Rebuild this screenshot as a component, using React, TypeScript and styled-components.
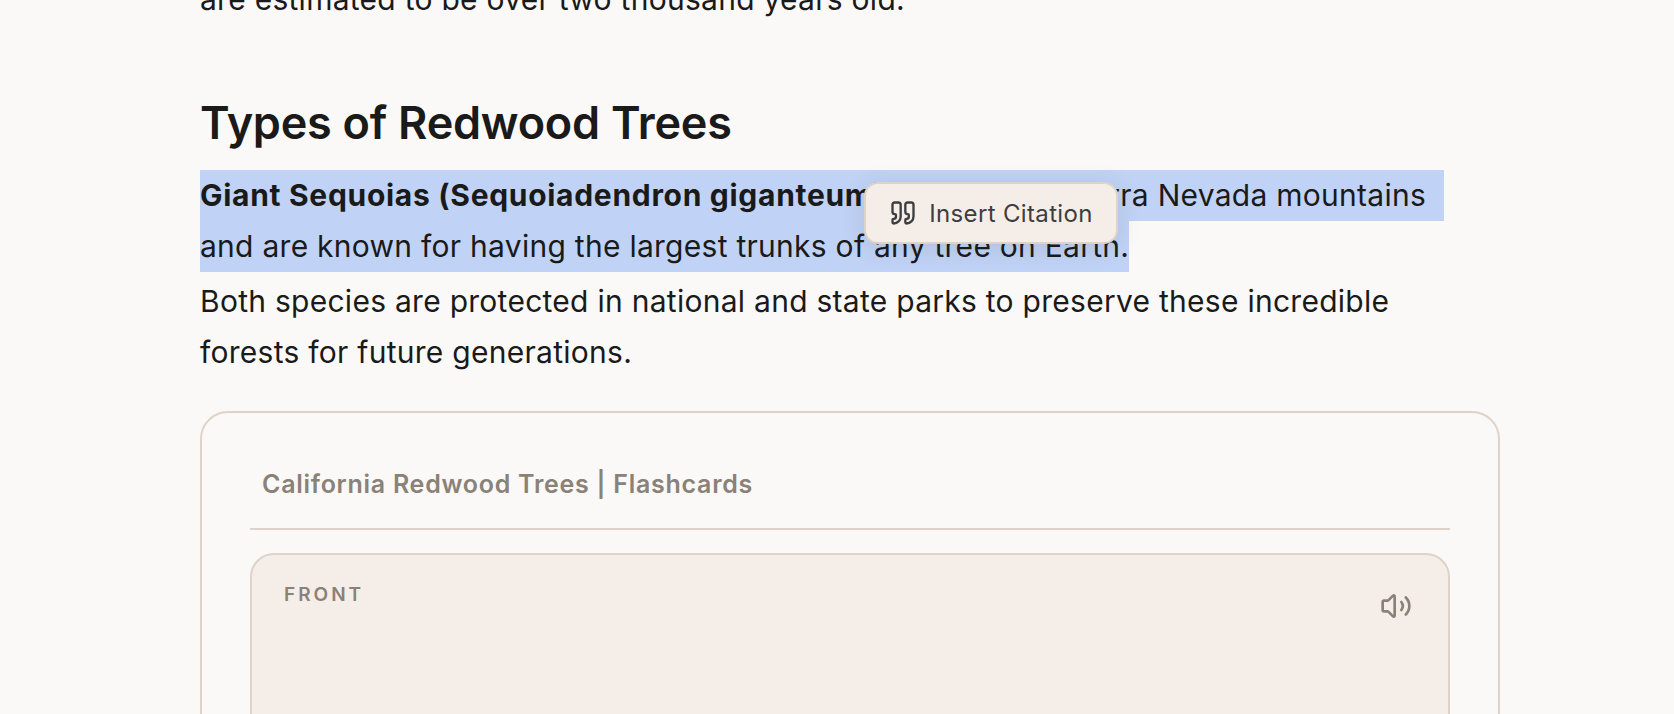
import React from "react";
import styled, { createGlobalStyle } from "styled-components";
import { Quote, Volume2 } from "lucide-react";

const Global = createGlobalStyle`
  html, body { margin: 0; padding: 0; height: 714px; overflow: hidden; background: #faf9f7; }
  body { font-family: Inter, "Liberation Sans", sans-serif; color: #1a1a1a; }
`;

const Column = styled.main`
  width: 1300px;
  margin: -26px 0 0 200px;
`;

const Paragraph = styled.p`
  margin: 0;
  font-size: 30px;
  line-height: 51px;
  letter-spacing: 0.27px;
`;

const Heading = styled.h2`
  margin: 68px 0 17px;
  font-size: 45px;
  line-height: 60px;
  font-weight: 600;
  letter-spacing: -0.25px;
`;

const SelectionBlock = styled.div`
  position: relative;
  margin-bottom: 4px;
`;

const SelectedLine = styled.span<{ $trail: number }>`
  display: block;
  width: fit-content;
  padding-right: ${(p) => p.$trail}px;
  background: #c0d3f6;
  white-space: nowrap;
`;

const Strong = styled.b`
  font-weight: 700;
  letter-spacing: 0.7px;
`;

const Popup = styled.button`
  position: absolute;
  left: 664px;
  top: 12px;
  width: 254px;
  height: 62px;
  box-sizing: border-box;
  display: flex;
  align-items: center;
  justify-content: center;
  gap: 12px;
  padding: 0;
  background: #f5eee8;
  border: 2px solid #ddd3c9;
  border-radius: 14px;
  box-shadow: 0 4px 24px rgba(60, 50, 40, 0.12);
  font-family: inherit;
  font-size: 24px;
  color: #3d3d40;
  letter-spacing: 0.35px;
`;

const Card = styled.section`
  margin-top: 33px;
  height: 500px;
  box-sizing: border-box;
  border: 2px solid #ddd3c9;
  border-radius: 28px;
  padding: 51px 48px 0;
`;

const CardTitle = styled.h3`
  margin: 0;
  padding: 0 12px 24px;
  border-bottom: 2px solid #ddd3c9;
  font-size: 25px;
  line-height: 40px;
  font-weight: 600;
  color: #8a8178;
  letter-spacing: 0.73px;
`;

const Flashcard = styled.div`
  margin-top: 23px;
  height: 400px;
  box-sizing: border-box;
  display: flex;
  justify-content: space-between;
  align-items: flex-start;
  background: #f5eee8;
  border: 2px solid #ddd3c9;
  border-radius: 24px;
  padding: 28px 36px 0 32px;
`;

const SideLabel = styled.span`
  font-size: 19px;
  line-height: 24px;
  font-weight: 600;
  letter-spacing: 3px;
  color: #8a8178;
`;

const SpeakerIcon = styled(Volume2)`
  margin-top: 7px;
  color: #8a8178;
`;

export default function App() {
  return (
    <>
      <Global />
      <Column>
        <Paragraph>are estimated to be over two thousand years old.</Paragraph>
        <Heading>Types of Redwood Trees</Heading>
        <SelectionBlock>
          <Paragraph>
            <SelectedLine $trail={18}>
              <Strong>Giant Sequoias (Sequoiadendron giganteum)</Strong> grow in the Sierra Nevada mountains
            </SelectedLine>
            <SelectedLine $trail={0}>and are known for having the largest trunks of any tree on Earth.</SelectedLine>
          </Paragraph>
          <Popup>
            <Quote size={28} strokeWidth={2} />
            Insert Citation
          </Popup>
        </SelectionBlock>
        <Paragraph>
          Both species are protected in national and state parks to preserve these incredible
          <br />
          forests for future generations.
        </Paragraph>
        <Card>
          <CardTitle>California Redwood Trees | Flashcards</CardTitle>
          <Flashcard>
            <SideLabel>FRONT</SideLabel>
            <SpeakerIcon size={32} strokeWidth={2} />
          </Flashcard>
        </Card>
      </Column>
    </>
  );
}
